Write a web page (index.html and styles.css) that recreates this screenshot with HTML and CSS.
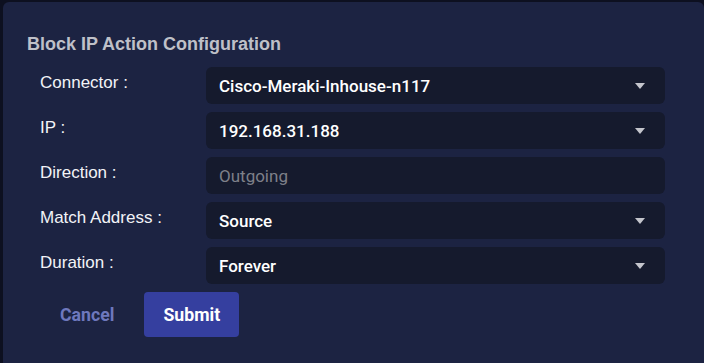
FILE: index.html
```html
<html>
    <head>
        <link rel="stylesheet" href="styles.css">
    </head>
    <body>
        <div class="panel">
            <h2 class="panel-title">Block IP Action Configuration</h2>

            <div class="form-grid">
                <label class="field-label">Connector :</label>
                <div class="select-box">
                    <span class="select-value">Cisco-Meraki-Inhouse-n117</span>
                    <span class="caret"></span>
                </div>

                <label class="field-label">IP :</label>
                <div class="select-box">
                    <span class="select-value">192.168.31.188</span>
                    <span class="caret"></span>
                </div>

                <label class="field-label">Direction :</label>
                <div class="select-box">
                    <span class="select-value placeholder">Outgoing</span>
                </div>

                <label class="field-label">Match Address :</label>
                <div class="select-box">
                    <span class="select-value">Source</span>
                    <span class="caret"></span>
                </div>

                <label class="field-label">Duration :</label>
                <div class="select-box">
                    <span class="select-value">Forever</span>
                    <span class="caret"></span>
                </div>
            </div>

            <div class="actions">
                <button class="btn btn-cancel">Cancel</button>
                <button class="btn btn-submit">Submit</button>
            </div>
        </div>
    </body>
</html>
```

FILE: styles.css
```css
    body {
        margin: 0;
        background-color: #0d1020;
        font-family: "Liberation Sans", Arial, sans-serif;
    }
    .panel {
        margin: 2px 0 0 3px;
        min-height: calc(100vh - 2px);
        box-sizing: border-box;
        background-color: #1c2342;
        border-radius: 6px 6px 0 0;
        padding: 32px 24px 0 24px;
    }
    .panel-title {
        margin: 0 0 12px 0;
        font-size: 18px; /* bold grey heading */
        font-weight: bold;
        color: #bfc0c8;
    }
    .form-grid {
        display: grid;
        grid-template-columns: 166px 459px;
        row-gap: 8px;
        margin-left: 13px;
    }
    .field-label {
        font-size: 17px;
        color: #f2f3f7;
        padding-top: 6px;
    }
    .select-box {
        height: 37px;
        display: flex;
        align-items: center;
        justify-content: space-between;
        background-color: #151a2d;
        border-radius: 6px;
        padding: 0 20px 0 13px;
    }
    .select-value {
        font-family: Roboto, "Liberation Sans", sans-serif;
        font-size: 17px;
        font-weight: 500;
        color: #ffffff;
    }
    .select-value.placeholder {
        font-weight: 400;
        color: #7e8089;
    }
    .caret {
        width: 0;
        height: 0;
        border-left: 5px solid transparent;
        border-right: 5px solid transparent;
        border-top: 6px solid #c4c5cc;
    }
    .actions {
        display: flex;
        gap: 10px;
        margin: 8px 0 0 13px;
    }
    .btn {
        height: 45px;
        padding: 0 20px;
        border: none;
        border-radius: 4px;
        font-family: Roboto, "Liberation Sans", sans-serif;
        font-size: 17.7px;
        font-weight: bold;
    }
    .btn-cancel {
        background: none;
        color: #6e78bd;
    }
    .btn-submit {
        padding: 0 19px;
        background-color: #353f9f;
        color: #ffffff;
    }
```
